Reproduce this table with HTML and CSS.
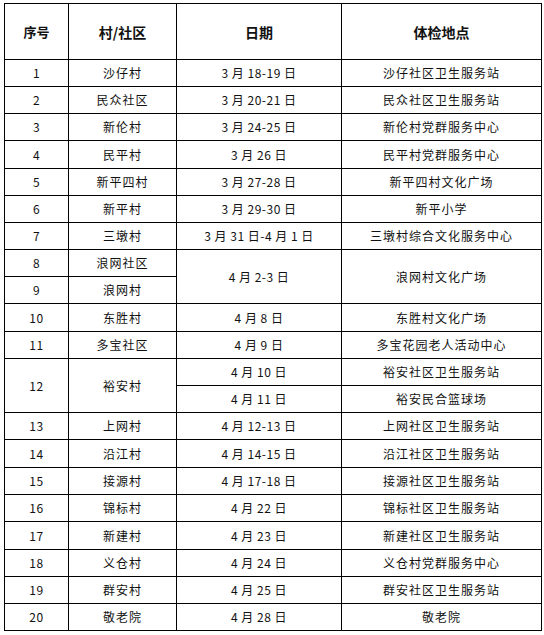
FILE: index.html
```html
<!DOCTYPE html>
<html lang="zh-CN">
<head>
<meta charset="utf-8">
<title>体检安排</title>
<link rel="stylesheet" href="styles.css">
</head>
<body>
<table class="schedule">
  <colgroup>
    <col class="c-no">
    <col class="c-village">
    <col class="c-date">
    <col class="c-place">
  </colgroup>
  <thead>
    <tr class="head">
      <th class="h-no">序号</th>
      <th>村/社区</th>
      <th>日期</th>
      <th>体检地点</th>
    </tr>
  </thead>
  <tbody>
    <tr><td class="num">1</td><td>沙仔村</td><td class="date">3 月 18-19 日</td><td>沙仔社区卫生服务站</td></tr>
    <tr><td class="num">2</td><td>民众社区</td><td class="date">3 月 20-21 日</td><td>民众社区卫生服务站</td></tr>
    <tr><td class="num">3</td><td>新伦村</td><td class="date">3 月 24-25 日</td><td>新伦村党群服务中心</td></tr>
    <tr class="tall"><td class="num">4</td><td>民平村</td><td class="date">3 月 26 日</td><td>民平村党群服务中心</td></tr>
    <tr><td class="num">5</td><td>新平四村</td><td class="date">3 月 27-28 日</td><td>新平四村文化广场</td></tr>
    <tr><td class="num">6</td><td>新平村</td><td class="date">3 月 29-30 日</td><td>新平小学</td></tr>
    <tr><td class="num">7</td><td>三墩村</td><td class="date">3 月 31 日-4 月 1 日</td><td>三墩村综合文化服务中心</td></tr>
    <tr><td class="num">8</td><td>浪网社区</td><td class="date" rowspan="2">4 月 2-3 日</td><td rowspan="2">浪网村文化广场</td></tr>
    <tr><td class="num">9</td><td>浪网村</td></tr>
    <tr class="tall"><td class="num">10</td><td>东胜村</td><td class="date">4 月 8 日</td><td>东胜村文化广场</td></tr>
    <tr><td class="num">11</td><td>多宝社区</td><td class="date">4 月 9 日</td><td>多宝花园老人活动中心</td></tr>
    <tr><td class="num" rowspan="2">12</td><td rowspan="2">裕安村</td><td class="date">4 月 10 日</td><td>裕安社区卫生服务站</td></tr>
    <tr><td class="date">4 月 11 日</td><td>裕安民合篮球场</td></tr>
    <tr><td class="num">13</td><td>上网村</td><td class="date">4 月 12-13 日</td><td>上网社区卫生服务站</td></tr>
    <tr class="tall"><td class="num">14</td><td>沿江村</td><td class="date">4 月 14-15 日</td><td>沿江社区卫生服务站</td></tr>
    <tr><td class="num">15</td><td>接源村</td><td class="date">4 月 17-18 日</td><td>接源社区卫生服务站</td></tr>
    <tr><td class="num">16</td><td>锦标村</td><td class="date">4 月 22 日</td><td>锦标社区卫生服务站</td></tr>
    <tr class="tall"><td class="num">17</td><td>新建村</td><td class="date">4 月 23 日</td><td>新建社区卫生服务站</td></tr>
    <tr><td class="num">18</td><td>义仓村</td><td class="date">4 月 24 日</td><td>义仓村党群服务中心</td></tr>
    <tr><td class="num">19</td><td>群安村</td><td class="date">4 月 25 日</td><td>群安社区卫生服务站</td></tr>
    <tr><td class="num">20</td><td>敬老院</td><td class="date">4 月 28 日</td><td>敬老院</td></tr>
  </tbody>
</table>
</body>
</html>
```

FILE: styles.css
```css
html, body {
  margin: 0;
  padding: 0;
  background: #ffffff;
}

body {
  padding: 3px 0 0 4px;
  font-family: "Noto Sans CJK SC", "Liberation Sans", sans-serif;
  color: #111111;
}

.schedule {
  border-collapse: collapse;
  table-layout: fixed;
  width: 537px;
}

.c-no { width: 64px; }
.c-village { width: 108px; }
.c-date { width: 165px; }
.c-place { width: 200px; }

.schedule th,
.schedule td {
  border: 1px solid #000000;
  padding: 0;
  text-align: center;
  vertical-align: middle;
  white-space: nowrap;
  overflow: hidden;
}

.schedule th {
  height: 55px;
  font-size: 14px;
  font-weight: 700;
  line-height: 16px;
}

.schedule th.h-no {
  font-size: 13px;
}

.schedule td {
  height: 26px;
  font-size: 12px;
  line-height: 14px;
  letter-spacing: 1px;
  font-weight: 400;
}

.schedule tr.tall td {
  height: 27px;
}

.schedule td.num,
.schedule td.date {
  letter-spacing: 0.5px;
}
```
